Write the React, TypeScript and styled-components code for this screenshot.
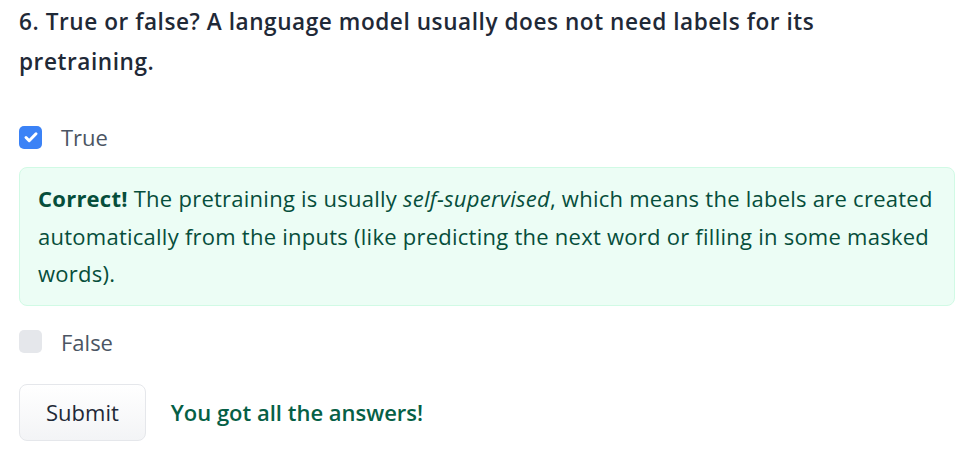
import React, { useState } from 'react';
import styled, { createGlobalStyle } from 'styled-components';

const GlobalStyle = createGlobalStyle`
  body {
    margin: 0;
    background: #ffffff;
    font-family: 'Open Sans', 'Noto Sans', sans-serif;
  }
`;

const Page = styled.div`
  width: 936px;
  padding: 2px 1px 0 19px;
`;

const Question = styled.h2`
  margin: 0 0 35px;
  font-size: 22.6px;
  line-height: 40px;
  font-weight: 600;
  letter-spacing: 0.55px;
  color: #1f2937;
`;

const Option = styled.label`
  display: flex;
  align-items: center;
  gap: 19px;
  height: 40px;
  font-size: 22px;
  color: #4b5563;
  cursor: pointer;
`;

const Box = styled.span<{ $checked: boolean }>`
  width: 23px;
  height: 23px;
  border-radius: 5px;
  display: flex;
  align-items: center;
  justify-content: center;
  background: ${p => (p.$checked ? '#3b82f6' : '#e5e7eb')};
`;

const Feedback = styled.div`
  margin: 10px 0 16px;
  padding: 12px 18px;
  border: 1px solid #d1fae5;
  border-radius: 8px;
  background: #ecfdf5;
  color: #064e3b;
  font-size: 22px;
  line-height: 37.5px;
  letter-spacing: 0.25px;
`;

const Footer = styled.div`
  display: flex;
  align-items: center;
  gap: 25px;
  margin-top: 22px;
`;

const SubmitButton = styled.button`
  height: 57px;
  padding: 0 26px;
  border: 1px solid #e5e7eb;
  border-radius: 8px;
  background: linear-gradient(#ffffff, #f3f4f6);
  color: #1f2937;
  font-family: inherit;
  font-size: 22px;
  cursor: pointer;
`;

const Result = styled.span`
  font-size: 22px;
  font-weight: 600;
  color: #065f46;
`;

const Check = () => (
  <svg width="16" height="16" viewBox="0 0 16 16" fill="none">
    <path d="M3 8.5l3.2 3.2L13 4.8" stroke="#fff" strokeWidth="3" strokeLinecap="round" strokeLinejoin="round" />
  </svg>
);

export default () => {
  const [answer, setAnswer] = useState<string>('True');

  return (
    <Page>
      <GlobalStyle />
      <Question>
        6. True or false? A language model usually does not need labels for its pretraining.
      </Question>
      <Option onClick={() => setAnswer('True')}>
        <Box $checked={answer === 'True'}>{answer === 'True' && <Check />}</Box>
        True
      </Option>
      <Feedback>
        <strong>Correct!</strong> The pretraining is usually <em>self-supervised</em>, which means the labels are
        created automatically from the inputs (like predicting the next word or filling in some masked words).
      </Feedback>
      <Option onClick={() => setAnswer('False')}>
        <Box $checked={answer === 'False'}>{answer === 'False' && <Check />}</Box>
        False
      </Option>
      <Footer>
        <SubmitButton>Submit</SubmitButton>
        <Result>You got all the answers!</Result>
      </Footer>
    </Page>
  );
};
